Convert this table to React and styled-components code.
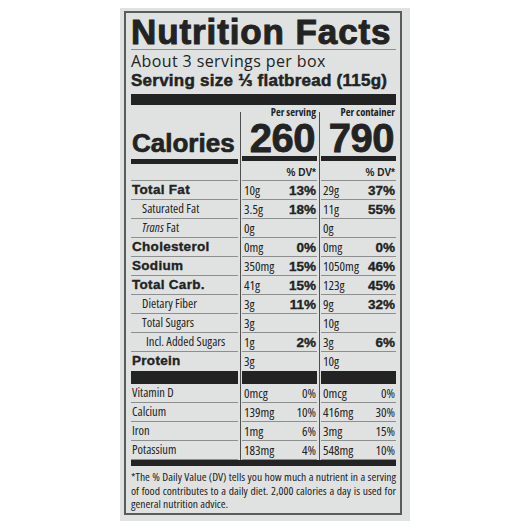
import React from 'react'
import styled, { createGlobalStyle, css } from 'styled-components'

const WIDE = `"Liberation Sans", Arial, sans-serif`
const NARROW = `"Open Sans", "Liberation Sans", sans-serif`
const INK = '#222322'
const RULE = '#8c8f8e'
const DIVIDER = '#4d4f4e'

const narrow = (size, lh, weight = 400, stretch = 75) => css`
  font: ${weight} ${size}px/${lh}px ${NARROW};
  font-stretch: ${stretch}%;
`

const heavy = (px) => css`
  -webkit-text-stroke: ${px}px ${INK};
`

const GlobalStyle = createGlobalStyle`
  html, body {
    margin: 0;
    background: #fff;
  }
  body {
    display: flex;
    justify-content: center;
    padding-top: 8px;
  }
`

const Panel = styled.div`
  width: 290px;
  height: 513px;
  box-sizing: border-box;
  padding: 3px 8px 6px 4px;
  background: #dfe2e1;
`

const Label = styled.section`
  box-sizing: border-box;
  height: 100%;
  border: 2px solid #5a5c5b;
  padding: 0 4px 0 5px;
  color: ${INK};
  display: flex;
  flex-direction: column;
`

const Title = styled.h1`
  margin: 0;
  padding-top: 2px;
  font: 700 35px/34px ${WIDE};
  letter-spacing: 0.9px;
  white-space: nowrap;
  border-bottom: 1px solid ${RULE};
  ${heavy(1)};
`

const Servings = styled.div`
  margin-top: 3px;
  ${narrow(16, 17, 400, 100)};
  letter-spacing: 0.4px;
`

const ServingSize = styled.div`
  margin-top: 1px;
  font: 700 17px/19px ${WIDE};
  letter-spacing: 0.25px;
  white-space: nowrap;
  ${heavy(0.5)};
`

const Bar = styled.div`
  height: ${p => p.$h}px;
  margin-top: ${p => p.$mt || 0}px;
  background: ${INK};
`

const Facts = styled.div`
  display: grid;
  grid-template-columns: 107px 75px 75px;
  column-gap: 4px;
  background:
    linear-gradient(${DIVIDER}, ${DIVIDER}) 109px 7px / 1px calc(100% - 7px) no-repeat,
    linear-gradient(${DIVIDER}, ${DIVIDER}) 188px 7px / 1px calc(100% - 7px) no-repeat;
`

const HeadCell = styled.div`
  padding: 1px 1px 0 0;
  height: 13px;
  text-align: right;
  white-space: nowrap;
  ${narrow(10.5, 12, 700)};
`

const CalCell = styled.div`
  height: 37px;
  display: flex;
  align-items: flex-end;
  justify-content: ${p => (p.$left ? 'flex-start' : 'flex-end')};
  padding: ${p => (p.$left ? '0 0 3px 1px' : '0 2px 0 0')};
  border-bottom: 5px solid ${INK};
`

const CalWord = styled.span`
  font: 700 26px/26px ${WIDE};
  ${heavy(0.7)};
`

const CalNum = styled.span`
  font: 700 40px/36px ${WIDE};
  letter-spacing: -0.5px;
  ${heavy(0.8)};
`

const DvCell = styled.div`
  height: 17px;
  padding: 1px 1px 0 0;
  box-sizing: border-box;
  text-align: right;
  font: 700 10px/16px ${WIDE};
  border-bottom: 1px solid ${RULE};
`

const Cell = styled.div`
  height: 18px;
  display: flex;
  align-items: baseline;
  justify-content: space-between;
  padding: 0 1px 0 ${p => p.$pl || 0}px;
  border-bottom: 1px solid ${p => (p.$noRule ? 'transparent' : RULE)};
  white-space: nowrap;
`

const Name = styled.span`
  ${p => (p.$bold
    ? css`font: 700 13.5px/18px ${WIDE}; letter-spacing: 0.3px; ${heavy(0.35)}`
    : narrow(12.5, 18))};
`

const Amount = styled.span`
  ${narrow(13, 18)};
`

const Percent = styled.span`
  ${p => (p.$plain ? narrow(13, 18) : css`font: 700 13.5px/18px ${WIDE}; ${heavy(0.35)}`)};
`

const BlockCell = styled.div`
  height: 13px;
  background: ${INK};
`

const Footnote = styled.div`
  margin-top: 4px;
  ${narrow(11.6, 13.5)};
`

const FootLine = styled.span`
  display: block;
  white-space: nowrap;
  text-align: ${p => (p.$last ? 'left' : 'justify')};
  text-align-last: ${p => (p.$last ? 'left' : 'justify')};
`

const NUTRIENTS = [
  { label: 'Total Fat', bold: true, a: ['10g', '13%'], b: ['29g', '37%'] },
  { label: 'Saturated Fat', indent: 10, a: ['3.5g', '18%'], b: ['11g', '55%'] },
  { label: <><i>Trans</i> Fat</>, indent: 10, a: ['0g'], b: ['0g'] },
  { label: 'Cholesterol', bold: true, a: ['0mg', '0%'], b: ['0mg', '0%'] },
  { label: 'Sodium', bold: true, a: ['350mg', '15%'], b: ['1050mg', '46%'] },
  { label: 'Total Carb.', bold: true, a: ['41g', '15%'], b: ['123g', '45%'] },
  { label: 'Dietary Fiber', indent: 10, a: ['3g', '11%'], b: ['9g', '32%'] },
  { label: 'Total Sugars', indent: 10, a: ['3g'], b: ['10g'] },
  { label: 'Incl. Added Sugars', indent: 14, a: ['1g', '2%'], b: ['3g', '6%'] },
  { label: 'Protein', bold: true, a: ['3g'], b: ['10g'], noRule: true },
]

const VITAMINS = [
  { label: 'Vitamin D', a: ['0mcg', '0%'], b: ['0mcg', '0%'] },
  { label: 'Calcium', a: ['139mg', '10%'], b: ['416mg', '30%'] },
  { label: 'Iron', a: ['1mg', '6%'], b: ['3mg', '15%'] },
  { label: 'Potassium', a: ['183mg', '4%'], b: ['548mg', '10%'] },
]

const ValueCell = ({ value, plain, noRule }) => (
  <Cell $pl={2} $noRule={noRule}>
    <Amount>{value[0]}</Amount>
    {value[1] && <Percent $plain={plain}>{value[1]}</Percent>}
  </Cell>
)

const NutrientRow = ({ row, plain }) => (
  <>
    <Cell $pl={1 + (row.indent || 0)} $noRule={row.noRule}>
      <Name $bold={row.bold}>{row.label}</Name>
    </Cell>
    <ValueCell value={row.a} plain={plain} noRule={row.noRule} />
    <ValueCell value={row.b} plain={plain} noRule={row.noRule} />
  </>
)

export default function App() {
  return (
    <>
      <GlobalStyle />
      <Panel>
        <Label>
          <Title>Nutrition Facts</Title>
          <Servings>About 3 servings per box</Servings>
          <ServingSize>Serving size ⅓ flatbread (115g)</ServingSize>
          <Bar $h={11} $mt={4} />
          <Facts>
            <HeadCell />
            <HeadCell>Per serving</HeadCell>
            <HeadCell>Per container</HeadCell>

            <CalCell $left><CalWord>Calories</CalWord></CalCell>
            <CalCell><CalNum>260</CalNum></CalCell>
            <CalCell><CalNum>790</CalNum></CalCell>

            <DvCell />
            <DvCell>% DV*</DvCell>
            <DvCell>% DV*</DvCell>

            {NUTRIENTS.map((row, i) => <NutrientRow key={i} row={row} />)}

            <BlockCell />
            <BlockCell />
            <BlockCell />

            {VITAMINS.map((row, i) => <NutrientRow key={i} row={row} plain />)}
          </Facts>
          <Bar $h={6} />
          <Footnote>
            <FootLine>*The % Daily Value (DV) tells you how much a nutrient in a serving</FootLine>
            <FootLine>of food contributes to a daily diet. 2,000 calories a day is used for</FootLine>
            <FootLine $last>general nutrition advice.</FootLine>
          </Footnote>
        </Label>
      </Panel>
    </>
  )
}
